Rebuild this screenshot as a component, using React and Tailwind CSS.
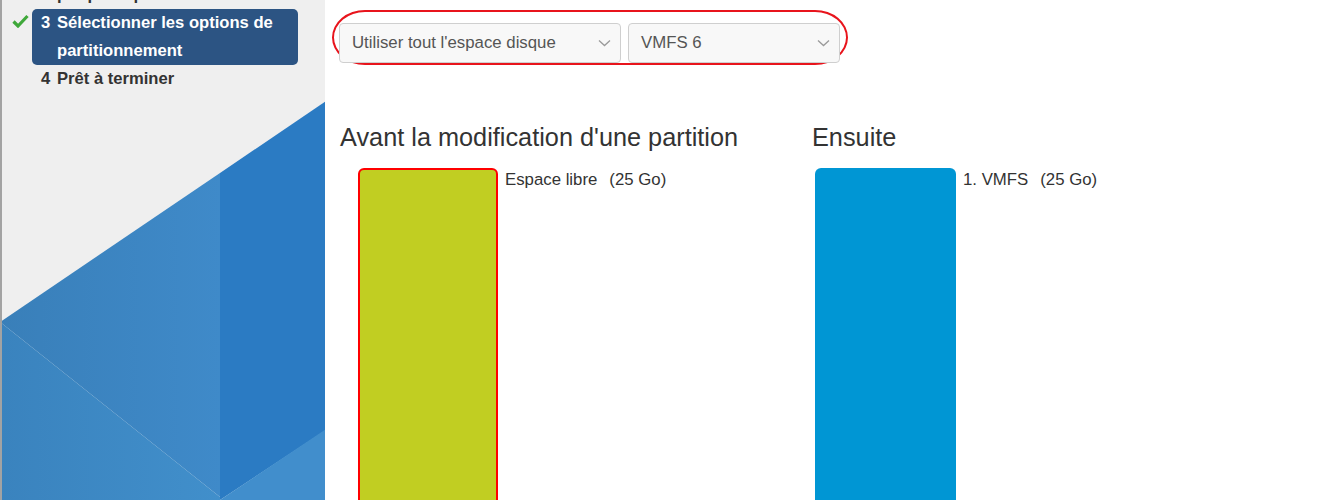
import React from 'react'

const STEPS = [
  { n: 2, text: 'Sélectionner le nom et le périphérique', done: true },
  { n: 3, text: 'Sélectionner les options de partitionnement', done: true, active: true },
  { n: 4, text: 'Prêt à terminer' },
]

function CheckMark() {
  return (
    <svg width="17" height="14" viewBox="0 0 17 14" className="mt-[5px] ml-[10px]">
      <path d="M1.5 7.5 L6 12 L15.5 2" fill="none" stroke="#3fa83a" strokeWidth="3.2" strokeLinejoin="miter" />
    </svg>
  )
}

function Chevron() {
  return (
    <svg width="13" height="8" viewBox="0 0 13 8" className="shrink-0">
      <path d="M1 1.5 L6.5 6.5 L12 1.5" fill="none" stroke="#9a9a9a" strokeWidth="1.3" />
    </svg>
  )
}

function Sidebar() {
  return (
    <div className="relative w-[325px] h-[500px] shrink-0 bg-[#efefef] border-l-2 border-[#a3a3a3] overflow-hidden">
      <svg className="absolute inset-0" width="323" height="500" viewBox="2 0 323 500">
        <defs>
          <linearGradient id="ga" x1="0" x2="1" y1="0" y2="0">
            <stop offset="0" stopColor="#397fb9" />
            <stop offset="1" stopColor="#3f8ac9" />
          </linearGradient>
          <linearGradient id="gc" x1="0" x2="1" y1="0" y2="0">
            <stop offset="0" stopColor="#3a83be" />
            <stop offset="1" stopColor="#418fcb" />
          </linearGradient>
        </defs>
        <polygon points="0,322 220,173 220,497" fill="url(#ga)" />
        <polygon points="220,173 326,101 326,430 220,500" fill="#2b7bc3" />
        <polygon points="0,322 220,497 220,500 0,500" fill="url(#gc)" />
        <polygon points="220,500 326,429 326,500" fill="#418ecc" />
      </svg>
      <ul className="relative mt-[-47px] flex flex-col font-['Liberation_Sans',Arial,sans-serif] text-[16.6px] font-bold leading-[28px]">
        {STEPS.map(s => (
          <li key={s.n} className="flex items-start">
            <div className="w-[30px] shrink-0">{s.done && <CheckMark />}</div>
            <div className={`flex w-[266px] pl-[9px] rounded-[5px] ${s.active ? 'bg-[#2c5483] text-white' : 'text-[#333]'}`}>
              <span className="w-[16px] shrink-0">{s.n}</span>
              <span>{s.text}</span>
            </div>
          </li>
        ))}
      </ul>
    </div>
  )
}

function FakeSelect({ value, width }) {
  return (
    <div className={`flex items-center justify-between h-[40px] ${width} pl-[12px] pr-[9px] rounded-[4px] border border-[#cfcfcf] bg-[#f8f8f8] text-[16.8px] text-[#555]`}>
      <span>{value}</span>
      <Chevron />
    </div>
  )
}

function Partition({ title, label, size, bar, barOffset }) {
  return (
    <div className="flex flex-col w-[472px]">
      <h2 className="text-[25.3px] leading-[28px] text-[#333]">{title}</h2>
      <div className={`flex items-start mt-[17px] ${barOffset}`}>
        <div className={`h-[340px] rounded-t-[6px] ${bar}`} />
        <div className="ml-[7px] mt-[2px] text-[16.8px] leading-[20px] text-[#333]">
          <span>{label}</span>
          <span className="ml-[12px]">{size}</span>
        </div>
      </div>
    </div>
  )
}

export default function App() {
  return (
    <div className="flex w-[1320px] h-[500px] overflow-hidden bg-white font-['Liberation_Sans',Arial,sans-serif]">
      <Sidebar />
      <main className="flex-1 flex flex-col pt-[10px]">
        {/* annotation ring around the options */}
        <div className="ml-[7px] w-[516px] h-[62px] rounded-[36px/30px] border-2 border-[#e8141c] flex gap-[7px] pl-[5px] pt-[11px]">
          <FakeSelect value="Utiliser tout l'espace disque" width="w-[282px]" />
          <FakeSelect value="VMFS 6" width="w-[212px]" />
        </div>

        <div className="flex ml-[15px] mt-[58px]">
          <Partition
            title="Avant la modification d'une partition"
            label="Espace libre"
            size="(25 Go)"
            bar="w-[140px] bg-[#c1ce22] border-2 border-[#ff0000]"
            barOffset="ml-[18px]"
          />
          <Partition
            title="Ensuite"
            label="1. VMFS"
            size="(25 Go)"
            bar="w-[141px] bg-[#0096d4]"
            barOffset="ml-[3px]"
          />
        </div>
      </main>
    </div>
  )
}
